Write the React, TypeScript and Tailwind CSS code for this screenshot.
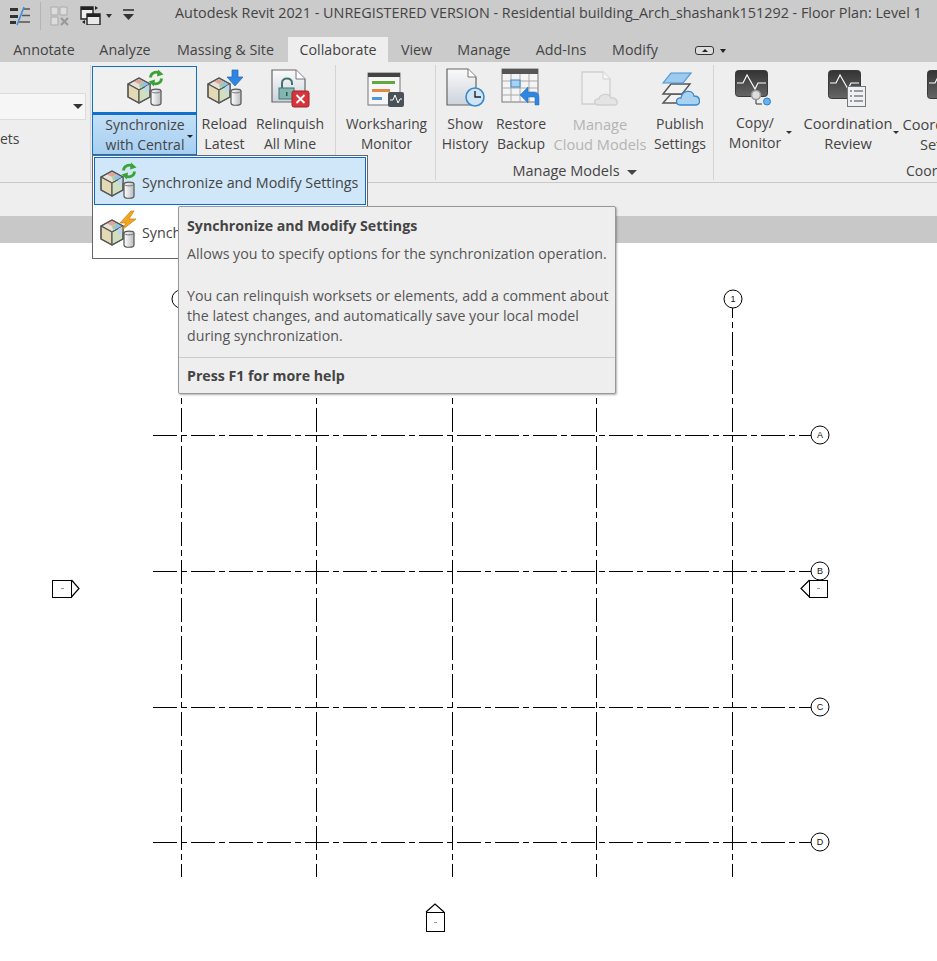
import type { ReactNode } from "react";

const FONT = "[font-family:'Open_Sans',sans-serif]";

const tabs = [
  { label: "Annotate", w: "w-[86px]" },
  { label: "Analyze", w: "w-[76px]" },
  { label: "Massing & Site", w: "w-[125px]" },
];
const tabsRight = [
  { label: "View", w: "w-[57px]" },
  { label: "Manage", w: "w-[78px]" },
  { label: "Add-Ins", w: "w-[76px]" },
  { label: "Modify", w: "w-[72px]" },
];

function Cube({ x, y }: { x: number; y: number }) {
  return (
    <g transform={`translate(${x} ${y})`} stroke="#555" strokeWidth="1.2" strokeLinejoin="round">
      <path d="M12 0 23 6 12 12 1 6Z" fill="#e8e3d6" />
      <path d="M12 1 17 3.5 12 6 7 3.5Z" fill="#dfa59c" stroke="none" />
      <path d="M12 6 17 3.5 20 5 13 10Z" fill="#a3d0a0" stroke="none" />
      <path d="M17 3.5 22 6 17 9.5 14 8Z" fill="#93c1e8" stroke="none" />
      <path d="M1 6 12 12V25L1 19Z" fill="#e3d9b4" />
      <path d="M12 12 23 6V19L12 25Z" fill="#cfdfc0" />
      <path d="M18 9 23 6V12L18 15Z" fill="#bcd8ec" stroke="none" />
      <path d="M1 6 12 0 23 6V19L12 25 1 19Z" fill="none" />
    </g>
  );
}

function Cylinder({ x, y }: { x: number; y: number }) {
  return (
    <g transform={`translate(${x} ${y})`}>
      <path d="M1 3C1 .5 11 .5 11 3V15C11 18 1 18 1 15Z" fill="url(#cyl)" stroke="#555" strokeWidth="1.2" />
      <path d="M1 3C1 5.5 11 5.5 11 3" fill="none" stroke="#777" strokeWidth="1" />
    </g>
  );
}

function SyncArrows({ x, y }: { x: number; y: number }) {
  return (
    <g transform={`translate(${x} ${y})`} fill="none" stroke="#3aa335" strokeWidth="2.8">
      <path d="M-5.5 -.5A5.5 5.5 0 0 1 3.5 -4.5" />
      <path d="M5.5 .5A5.5 5.5 0 0 1 -3.5 4.5" />
      <path d="M2 -8.5 7.5 -3.5 1 -1.5Z" fill="#3aa335" stroke="none" />
      <path d="M-2 8.5 -7.5 3.5 -1 1.5Z" fill="#3aa335" stroke="none" />
    </g>
  );
}

function ModelIcon({ badge, className }: { badge: "sync" | "down" | "bolt"; className?: string }) {
  return (
    <svg width="40" height="40" viewBox="0 0 40 40" className={className}>
      <Cube x={2} y={10} />
      <Cylinder x={25} y={20} />
      {badge === "sync" && <SyncArrows x={31} y={10} />}
      {badge === "down" && <path d="M27 2H33V9H38L30 18 22 9H27Z" fill="#2f86e0" stroke="#1f66b8" strokeWidth=".7" />}
      {badge === "bolt" && <path d="M33 1 22 13H28L24 20 38 9H31L36 1Z" fill="#f2a51f" stroke="#c97f10" strokeWidth=".7" />}
    </svg>
  );
}

function RelinquishIcon() {
  return (
    <svg width="40" height="40" viewBox="0 0 40 40">
      <path d="M2 2H26L35 11V34H2Z" fill="url(#doc)" stroke="#666" strokeWidth="1.2" />
      <path d="M26 2V11H35" fill="#fff" stroke="#777" />
      <path d="M12 20V15C12 9 22 9 22 15V17" fill="none" stroke="#3f7471" strokeWidth="2" />
      <rect x="9" y="20" width="15" height="11" fill="#84b6b1" stroke="#3f7471" />
      <rect x="16" y="24" width="1.5" height="4" fill="#2c5755" />
      <rect x="22" y="23" width="17" height="16" rx="2" fill="#d8343b" stroke="#9d2228" />
      <path d="M26.5 27 34.5 35M34.5 27 26.5 35" stroke="#fff" strokeWidth="1.8" />
    </svg>
  );
}

function WorksharingIcon() {
  return (
    <svg width="40" height="40" viewBox="0 0 40 40">
      <rect x="1" y="5" width="32" height="32" fill="#f6f6f6" stroke="#777" />
      <rect x="1" y="5" width="32" height="4" fill="#444" />
      <rect x="5" y="13" width="23" height="3" fill="#62a83e" />
      <rect x="5" y="21" width="18" height="3" fill="#dd8a45" />
      <rect x="5" y="29" width="10" height="3" fill="#4f97dc" />
      <rect x="21" y="24" width="16" height="15" rx="2" fill="#4b5158" />
      <path d="M23 32H26L28 27 31 35 33 31H35" fill="none" stroke="#fff" strokeWidth="1" />
    </svg>
  );
}

function HistoryIcon() {
  return (
    <svg width="40" height="40" viewBox="0 0 40 40">
      <path d="M2 1H23L31 9V37H2Z" fill="url(#doc)" stroke="#666" strokeWidth="1.2" />
      <path d="M23 1V9H31" fill="#fff" stroke="#777" />
      <circle cx="30" cy="29" r="9" fill="#cfe4f5" stroke="#3b88c9" strokeWidth="1.6" />
      <path d="M30 23V29H36" fill="none" stroke="#222" strokeWidth="1.4" />
    </svg>
  );
}

function BackupIcon() {
  return (
    <svg width="40" height="40" viewBox="0 0 40 40">
      <rect x="1" y="1" width="36" height="33" fill="#f4f4f4" stroke="#777" />
      <rect x="1" y="1" width="36" height="5" fill="#555" />
      <path d="M1 13H37M1 20H37M1 27H37M10 6V34M19 6V34M28 6V34" stroke="#aaa" strokeWidth="1" />
      <rect x="10" y="12" width="9" height="7" fill="#a8d0f0" stroke="#3b88c9" />
      <path d="M19 27 27 19V24H33C37 24 38 27 38 30V37H34V30C34 29 33 29 32 29H27V35Z" fill="#2f86e0" stroke="#1f66b8" strokeWidth=".5" />
    </svg>
  );
}

function CloudDocIcon() {
  return (
    <svg width="40" height="40" viewBox="0 0 40 40">
      <path d="M2 4H23L30 11V36H2Z" fill="#f0f0f0" stroke="#d0d0d0" strokeWidth="1.4" />
      <path d="M23 4V11H30" fill="#f6f6f6" stroke="#d0d0d0" />
      <path d="M18 37C13 37 14 30 19 31 20 25 30 25 31 30 37 29 40 37 34 37Z" fill="#e4e4e4" stroke="#cfcfcf" strokeWidth="1.4" />
    </svg>
  );
}

function PublishIcon() {
  return (
    <svg width="40" height="40" viewBox="0 0 40 40">
      <path d="M3 35 11 26H30L22 35Z" fill="#f2f2f2" stroke="#555" strokeWidth="1.4" />
      <path d="M3 26 11 16H30L22 26Z" fill="#f2f2f2" stroke="#555" strokeWidth="1.4" />
      <path d="M3 15 11 5H31L23 15Z" fill="#9ccbef" stroke="#4b94d2" strokeWidth="1.2" />
      <path d="M21 37C15 37 15 29 21 30 22 22 33 21 34 28 41 28 41 37 36 37Z" fill="#a9d2f1" stroke="#3b88c9" strokeWidth="1.3" />
    </svg>
  );
}

function Monitor({ h }: { h: number }) {
  return (
    <>
      <rect x="0.5" y="2.5" width="32" height={h} rx="3" fill="url(#mon)" stroke="#3a3a3a" />
      <path d="M2 15H8L12 7 20 21 23 15H31" fill="none" stroke="#fff" strokeWidth="1.1" />
    </>
  );
}

function CopyMonitorIcon() {
  return (
    <svg width="40" height="40" viewBox="0 0 40 40">
      <Monitor h={26} />
      <circle cx="21" cy="27" r="4.5" fill="#ddd" stroke="#999" strokeWidth="1.6" />
      <path d="M21 32V36H27" fill="none" stroke="#333" />
      <circle cx="32" cy="33.5" r="3.5" fill="#66b2f0" stroke="#2f7fc8" />
    </svg>
  );
}

function CoordinationIcon() {
  return (
    <svg width="40" height="40" viewBox="0 0 40 40">
      <Monitor h={28} />
      <rect x="19.5" y="18.5" width="18" height="20" fill="#eef1f3" stroke="#777" />
      <path d="M22 23H24M26 23H35M22 28H24M26 28H35M22 33H24M26 33H35" stroke="#444" strokeWidth="1.2" />
    </svg>
  );
}

function RibbonButton({ lines, icon, w, disabled, up, arrow, size = "text-[14px]" }: { lines: string[]; icon: ReactNode; w: string; disabled?: boolean; up?: boolean; arrow?: string; size?: string }) {
  return (
    <div className={`relative ${w} flex shrink-0 flex-col items-center`}>
      <div className="flex h-[49px] items-start justify-center pt-[3px]">{icon}</div>
      <div className={`whitespace-nowrap text-center ${size} leading-[20px] ${up ? "-mt-px" : ""} ${disabled ? "text-[#b4b4b4]" : "text-[#444]"}`}>
        {lines.map((l) => (
          <div key={l}>{l}</div>
        ))}
      </div>
      {arrow && <span className={`absolute top-[66px] ${arrow} h-0 w-0 border-x-[3px] border-t-[3px] border-x-transparent border-t-[#333]`} />}
    </div>
  );
}

function Panel({ w, children, label }: { w: string; children: ReactNode; label?: ReactNode }) {
  return (
    <div className={`relative ${w} flex h-full shrink-0 border-r border-[#d4d4d4]`}>
      <div className="flex items-start">{children}</div>
      {label}
    </div>
  );
}

function Bubble({ x, y, t }: { x: number; y: number; t: string }) {
  return (
    <g>
      <circle cx={x} cy={y} r="9" fill="#fff" stroke="#000" />
      <text x={x} y={y + 3} textAnchor="middle" fontSize="9" fontFamily="'Liberation Sans', sans-serif" fill="#111">
        {t}
      </text>
    </g>
  );
}

function PlanCanvas() {
  const dash = "24 4 6 4";
  return (
    <svg width="937" height="718" viewBox="0 243 937 718" className="block bg-white">
      <g stroke="#000" strokeWidth="1" strokeDasharray={dash} shapeRendering="crispEdges">
        {[181.5, 316.5, 452.5, 596.5, 732.5].map((x) => (
          <line key={x} x1={x} x2={x} y1="308" y2="877" strokeDashoffset="14" />
        ))}
        {[435.5, 571.5, 707.5, 842.5].map((y) => (
          <line key={y} x1="153" x2="811" y1={y} y2={y} />
        ))}
      </g>
      <circle cx="181" cy="299" r="9" fill="#fff" stroke="#000" />
      <Bubble x={733} y={299} t="1" />
      <Bubble x={820} y={435} t="A" />
      <Bubble x={820} y={571} t="B" />
      <Bubble x={820} y={707} t="C" />
      <Bubble x={820} y={842} t="D" />
      <g fill="#fff" stroke="#000" strokeWidth="1.2" shapeRendering="crispEdges">
        <path d="M71.5 580 79 588.5 71.5 597" shapeRendering="auto" />
        <rect x="52.5" y="580.5" width="19" height="17" />
        <path d="M809.5 580 801 588.5 809.5 597" shapeRendering="auto" />
        <rect x="809.5" y="580.5" width="18" height="17" />
        <path d="M426 912 435 904 444 912" shapeRendering="auto" />
        <rect x="426.5" y="912.5" width="18" height="19" />
      </g>
      <g fill="#999">
        <rect x="61" y="588" width="3" height="1" />
        <rect x="817" y="588" width="3" height="1" />
        <rect x="434" y="922" width="3" height="1" />
      </g>
    </svg>
  );
}

export default function App() {
  return (
    <div className={`relative h-[961px] w-[937px] overflow-hidden bg-white ${FONT} text-[#444]`}>
      <svg width="0" height="0" className="absolute">
        <defs>
          <linearGradient id="cyl" x1="0" x2="1" y1="0" y2="0">
            <stop offset="0" stopColor="#fff" />
            <stop offset="1" stopColor="#b8bcc0" />
          </linearGradient>
          <linearGradient id="doc" x1="0" x2="0" y1="0" y2="1">
            <stop offset="0" stopColor="#fafafa" />
            <stop offset="1" stopColor="#cdd3dc" />
          </linearGradient>
          <linearGradient id="mon" x1="0" x2="0" y1="0" y2="1">
            <stop offset="0" stopColor="#333" />
            <stop offset="1" stopColor="#666" />
          </linearGradient>
        </defs>
      </svg>

      {/* title bar */}
      <div className="flex h-[38px] items-start bg-[#cbcbcb]">
        <svg width="22" height="20" viewBox="0 0 22 20" className="ml-[9px] mt-[6px]">
          <path d="M1 2H9V5H1ZM1 9H9V12H1ZM1 15H7V18H1Z" fill="#333" />
          <path d="M14 3H21M13 9.5H21M10 16H21" stroke="#555" strokeWidth="1.4" />
          <path d="M15 1 8 19" stroke="#3c8ee0" strokeWidth="1.6" />
        </svg>
        <div className="ml-[9px] mt-[2px] h-[28px] w-px bg-[#b4b4b4]" />
        <svg width="20" height="20" viewBox="0 0 20 20" className="ml-[9px] mt-[6px]">
          <path d="M1 1H8V9H1ZM10 1H17V9H10ZM1 11H8V19H1Z" fill="#dcdcdc" stroke="#aaa" />
          <path d="M11 12 18 19M18 12 11 19" stroke="#999" strokeWidth="2.2" />
        </svg>
        <svg width="21" height="20" viewBox="0 0 21 20" className="ml-[10px] mt-[5px]">
          <path d="M1 2H13V14H1Z" fill="#eee" stroke="#222" strokeWidth="1.4" />
          <path d="M1 2H13V5H1Z" fill="#222" />
          <path d="M7 9H20V20H7Z" fill="#e9e9e9" stroke="#222" strokeWidth="1.4" />
          <path d="M7 9H20V12H7Z" fill="#222" />
          <path d="M15 1 18 3 15 5ZM5 15 2 17 5 19Z" fill="#222" />
        </svg>
        <span className="ml-[5px] mt-[14px] h-0 w-0 border-x-[3.5px] border-t-[4px] border-x-transparent border-t-[#333]" />
        <svg width="13" height="12" viewBox="0 0 13 12" className="ml-[10px] mt-[9px]">
          <path d="M1 1H12" stroke="#333" strokeWidth="1.6" />
          <path d="M1 5H12L6.5 11Z" fill="#333" />
        </svg>
        <div className="ml-[40px] mt-[3px] whitespace-nowrap text-[14.37px] leading-[20px] text-[#444]">
          Autodesk Revit 2021 - UNREGISTERED VERSION - Residential building_Arch_shashank151292 - Floor Plan: Level 1
        </div>
      </div>

      {/* tabs */}
      <div className="flex h-[24px] items-start bg-[#cbcbcb] pl-[1px] text-[14.3px] leading-[24px]">
        {tabs.map((t) => (
          <div key={t.label} className={`${t.w} shrink-0 text-center`}>
            {t.label}
          </div>
        ))}
        <div className="-mt-px h-[25px] w-[100px] shrink-0 bg-[#eeeeee] text-center leading-[25px]">Collaborate</div>
        {tabsRight.map((t) => (
          <div key={t.label} className={`${t.w} shrink-0 text-center`}>
            {t.label}
          </div>
        ))}
        <div className="ml-[24px] mt-[8px] flex h-[9px] w-[19px] items-center justify-center rounded-[3px] border border-[#333] bg-[#ddd]">
          <span className="h-0 w-0 border-x-[3px] border-b-[3px] border-x-transparent border-b-[#222]" />
        </div>
        <span className="ml-[6px] mt-[11px] h-0 w-0 border-x-[3px] border-t-[4px] border-x-transparent border-t-[#222]" />
      </div>

      {/* ribbon */}
      <div className="flex h-[121px] border-b border-[#c8c8c8] bg-[#eeeeee] pb-[2px] pt-[3px]">
        <Panel w="w-[91px]">
          <div className="w-[90px] pt-[28px]">
            <div className="flex h-[27px] w-[86px] items-center justify-end border border-l-0 border-[#dcdcdc] bg-[#f6f6f6] pr-[2px]">
              <span className="h-0 w-0 border-x-[5px] border-t-[5px] border-x-transparent border-t-[#333]" />
            </div>
            <div className="mt-[9px] pl-0 text-[14px] leading-[20px]">ets</div>
          </div>
        </Panel>
        <Panel w="w-[245px]">
          <div className="ml-px mt-px flex h-[89px] w-[105px] shrink-0 flex-col">
            <div className="flex h-[47px] shrink-0 items-start justify-center border border-[#1070cc] bg-[#f0f0f0] pt-[1px]">
              <ModelIcon badge="sync" />
            </div>
            <div className="relative h-[42px] shrink-0 border border-t-2 border-[#1070cc] bg-gradient-to-b from-[#c4dff6] to-[#a6cff2] pl-[1px] text-center text-[14px] leading-[20px] text-[#444]">
              <div>Synchronize</div>
              <div>with Central</div>
              <span className="absolute right-[3px] top-[20px] h-0 w-0 border-x-[3px] border-t-[3px] border-x-transparent border-t-[#222]" />
            </div>
          </div>
          <RibbonButton w="w-[55px]" size="text-[14.3px]" lines={["Reload", "Latest"]} icon={<ModelIcon badge="down" />} />
          <RibbonButton w="w-[76px]" lines={["Relinquish", "All Mine"]} icon={<RelinquishIcon />} />
        </Panel>
        <Panel w="w-[100px]">
          <RibbonButton w="w-[101px]" size="text-[13.7px]" lines={["Worksharing", "Monitor"]} icon={<WorksharingIcon />} />
        </Panel>
        <Panel
          w="w-[278px]"
          label={
            <div className="absolute bottom-[-1px] left-0 flex w-full items-center justify-center gap-[7px] text-[14.5px] leading-[20px]">
              Manage Models
              <span className="mt-[2px] h-0 w-0 border-x-[5px] border-t-[5px] border-x-transparent border-t-[#444]" />
            </div>
          }
        >
          <RibbonButton w="w-[58px]" lines={["Show", "History"]} icon={<HistoryIcon />} />
          <RibbonButton w="w-[54px]" lines={["Restore", "Backup"]} icon={<BackupIcon />} />
          <RibbonButton w="w-[104px]" size="text-[14.6px]" disabled lines={["Manage", "Cloud Models"]} icon={<CloudDocIcon />} />
          <RibbonButton w="w-[56px]" lines={["Publish", "Settings"]} icon={<PublishIcon />} />
        </Panel>
        <div className="relative flex h-full items-start">
          <RibbonButton w="w-[82px]" up lines={["Copy/", "Monitor"]} icon={<CopyMonitorIcon />} arrow="right-[4px]" />
          <div className="w-[2px]" />
          <RibbonButton w="w-[100px]" size="text-[14.6px]" up lines={["Coordination", "Review"]} icon={<CoordinationIcon />} arrow="right-[-1px]" />
          <RibbonButton w="w-[98px]" size="text-[14.6px]" lines={["Coordination", "Settings"]} icon={<CoordinationIcon />} />
          <div className="absolute bottom-[-1px] left-[192px] text-[14px] leading-[20px]">Coordinate</div>
        </div>
      </div>

      {/* options bar and view tab strip */}
      <div className="h-[33px] bg-[#eeeeee]" />
      <div className="h-[27px] bg-[#c8c8c8]" />

      <PlanCanvas />

      {/* open dropdown */}
      <div className="absolute left-[92px] top-[155px] h-[104px] w-[276px] border border-[#666] bg-white p-px text-[14.3px]">
        <div className="flex h-[48px] items-center border border-[#0a6cc9] bg-[#cfe7f8] pl-[3px] text-[#444]">
          <ModelIcon badge="sync" />
          <span className="ml-[4px] whitespace-nowrap pt-[4px]">Synchronize and Modify Settings</span>
        </div>
        <div className="flex h-[50px] items-center pl-[4px]">
          <ModelIcon badge="bolt" />
          <span className="ml-[4px] whitespace-nowrap pt-[6px]">Synchronize Now</span>
        </div>
      </div>

      {/* tooltip */}
      <div className="absolute left-[178px] top-[206px] h-[188px] w-[438px] rounded-[2px] border border-[#999] bg-[#eeeeee] text-[14.2px] leading-[20px] text-[#555] shadow-[1px_1px_2px_rgba(0,0,0,0.3)]">
        <div className="px-[8px] pt-[9px] font-bold text-[#444]">Synchronize and Modify Settings</div>
        <div className="mt-[8px] whitespace-nowrap px-[8px]">Allows you to specify options for the synchronization operation.</div>
        <div className="mt-[22px] whitespace-nowrap px-[8px]">
          <div>You can relinquish worksets or elements, add a comment about</div>
          <div>the latest changes, and automatically save your local model</div>
          <div>during synchronization.</div>
        </div>
        <div className="mt-[11px] border-t border-[#ccc] px-[8px] pt-[8px] font-bold text-[#444]">Press F1 for more help</div>
      </div>
    </div>
  );
}
